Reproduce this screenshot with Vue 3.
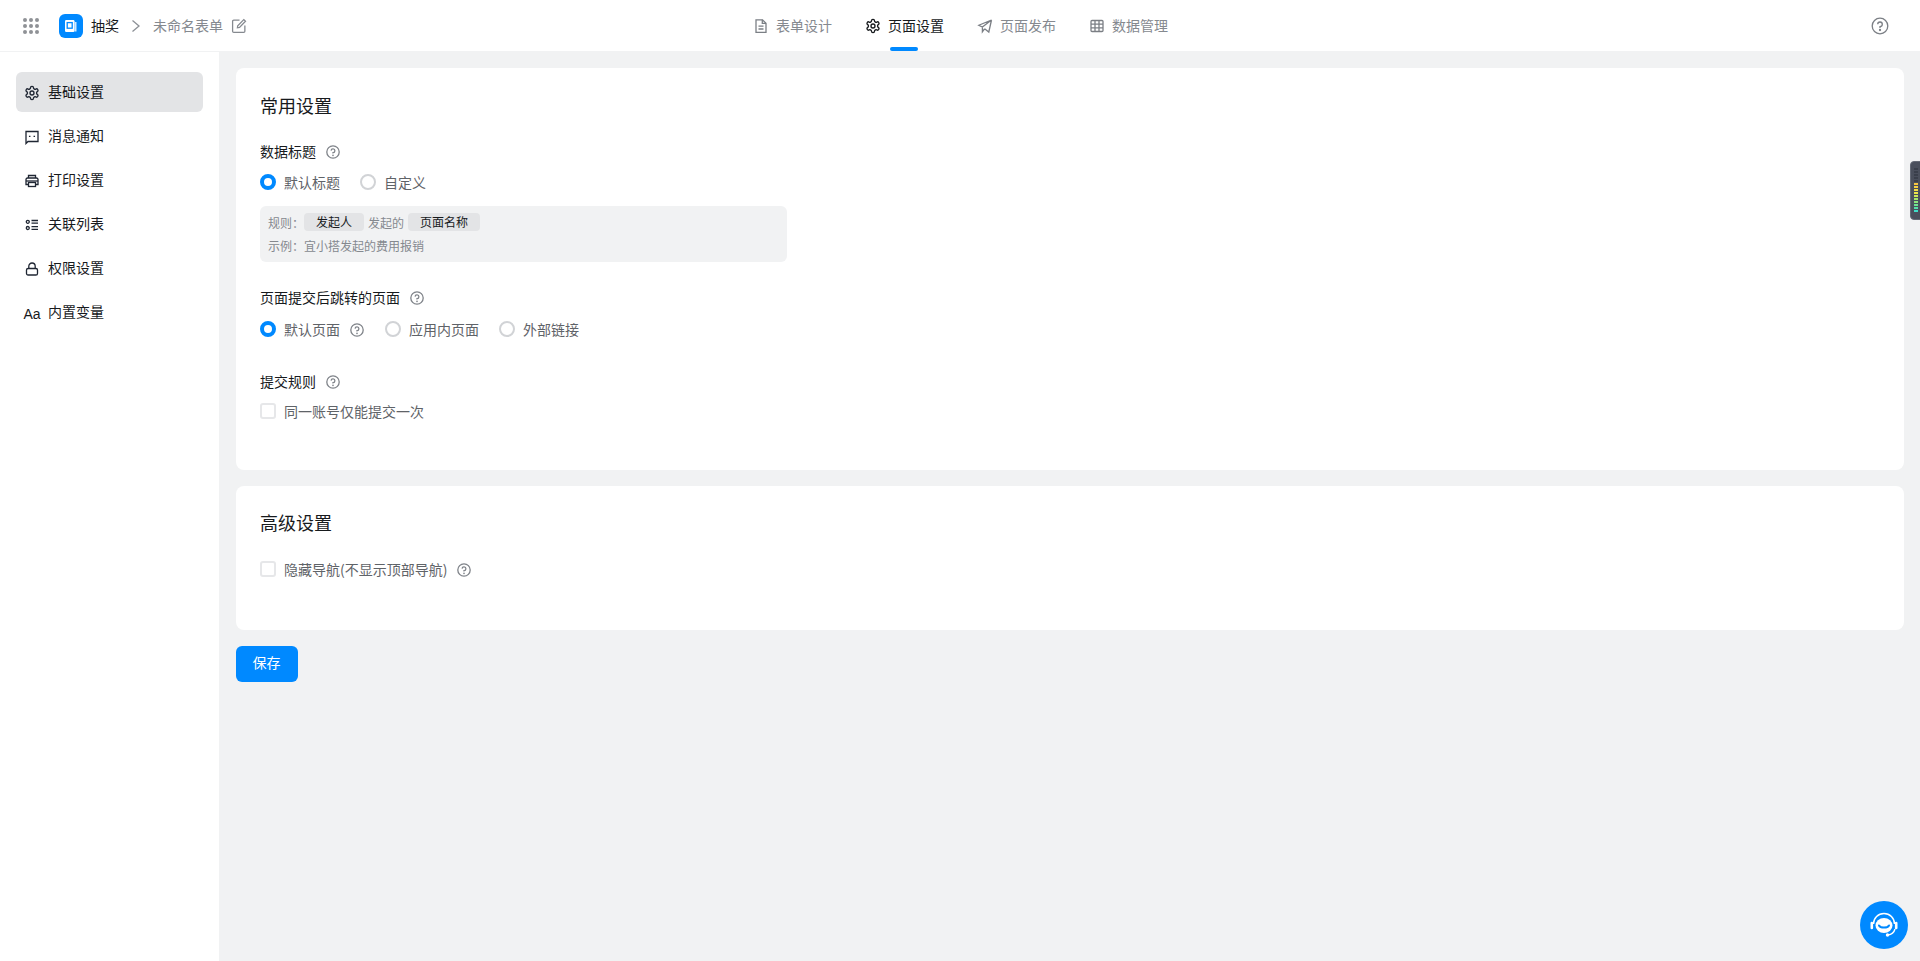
<script setup>
const navs = [
  { text: '表单设计', icon: 'doc' },
  { text: '页面设置', icon: 'gear', active: true },
  { text: '页面发布', icon: 'send' },
  { text: '数据管理', icon: 'table' }
]
const side = [
  { text: '基础设置', icon: 'gear', active: true },
  { text: '消息通知', icon: 'msg' },
  { text: '打印设置', icon: 'print' },
  { text: '关联列表', icon: 'list' },
  { text: '权限设置', icon: 'lock' },
  { text: '内置变量', icon: 'aa' }
]
const gearPath = 'M12.22 2h-.44a2 2 0 0 0-2 2v.18a2 2 0 0 1-1 1.73l-.43.25a2 2 0 0 1-2 0l-.15-.08a2 2 0 0 0-2.73.73l-.22.38a2 2 0 0 0 .73 2.73l.15.1a2 2 0 0 1 1 1.72v.51a2 2 0 0 1-1 1.74l-.15.09a2 2 0 0 0-.73 2.73l.22.38a2 2 0 0 0 2.73.73l.15-.08a2 2 0 0 1 2 0l.43.25a2 2 0 0 1 1 1.73V20a2 2 0 0 0 2 2h.44a2 2 0 0 0 2-2v-.18a2 2 0 0 1 1-1.73l.43-.25a2 2 0 0 1 2 0l.15.08a2 2 0 0 0 2.73-.73l.22-.39a2 2 0 0 0-.73-2.73l-.15-.08a2 2 0 0 1-1-1.74v-.5a2 2 0 0 1 1-1.74l.15-.09a2 2 0 0 0 .73-2.73l-.22-.38a2 2 0 0 0-2.73-.73l-.15.08a2 2 0 0 1-2 0l-.43-.25a2 2 0 0 1-1-1.73V4a2 2 0 0 0-2-2z'
const bars = ['#3a3f4b','#3a3f4b','#3a3f4b','#3a3f4b','#3a3f4b','#f5c542','#f5d142','#f2dc45','#eee64a','#cfe856','#a6e66a','#8ae47c','#6ee290','#55e0a8','#40ddc8']
</script>

<template>
  <div class="page">
    <header class="topbar">
      <div class="top-left">
        <span class="dots"><i v-for="n in 9" :key="n"></i></span>
        <span class="logo">
          <svg width="16" height="16" viewBox="0 0 16 16" fill="none">
            <rect x="2" y="2" width="9.5" height="12" rx="1.2" fill="#fff"/>
            <rect x="4.2" y="4.6" width="5" height="5.6" fill="none" stroke="#0089ff" stroke-width="1.3"/>
            <path d="M12.5 4v9.5" stroke="#cfe8ff" stroke-width="2"/>
          </svg>
        </span>
        <span class="app-name lift">抽奖</span>
        <svg class="chev" width="10" height="14" viewBox="0 0 10 14" fill="none"><path d="M1.5 1.5L8 7l-6.5 5.5" stroke="#8c9096" stroke-width="1.3"/></svg>
        <span class="form-name lift">未命名表单</span>
        <svg class="edit" width="16" height="16" viewBox="0 0 15 15" fill="none" stroke="#85898f" stroke-width="1.2"><path d="M8 2H2.6A1.1 1.1 0 0 0 1.5 3.1v9.3a1.1 1.1 0 0 0 1.1 1.1h9.3a1.1 1.1 0 0 0 1.1-1.1V7"/><path d="M6 9.2l.3-2L12 1.5l1.6 1.6L8 8.9z"/></svg>
      </div>
      <nav class="top-nav">
        <div v-for="n in navs" :key="n.text" class="nav-item" :class="{ on: n.active }">
          <svg width="16" height="16" viewBox="0 0 16 16" fill="none" stroke="currentColor" stroke-width="1.3">
            <template v-if="n.icon === 'doc'">
              <path d="M3 1.8h6.5L13 5.3v9H3z"/><path d="M9.3 1.8v3.6H13M5.5 8.2h5M5.5 11h5"/>
            </template>
            <template v-else-if="n.icon === 'gear'">
              <g transform="scale(.6667)" stroke-width="2"><path :d="gearPath"/><circle cx="12" cy="12" r="3"/></g>
            </template>
            <template v-else-if="n.icon === 'send'">
              <path d="M14.5 2L1.8 7.2l3.6 1.9L14.5 2zM14.5 2l-2.7 12-4.2-3.2M5.4 9.1v4.6l2.2-2.9"/>
            </template>
            <template v-else>
              <rect x="2" y="2.5" width="12" height="11" rx="1"/><path d="M6 2.5v11M10 2.5v11M2 6.2h12M2 9.8h12"/>
            </template>
          </svg>
          <span class="lift">{{ n.text }}</span>
        </div>
      </nav>
      <div class="top-right">
        <svg width="18" height="18" viewBox="0 0 18 18" fill="none" stroke="#7b7f85" stroke-width="1.3">
          <circle cx="9" cy="9" r="7.8"/><path d="M6.7 7.2A2.3 2.3 0 1 1 9 9.6v1.3"/><circle cx="9" cy="13" r=".5" fill="#7b7f85"/>
        </svg>
      </div>
    </header>

    <div class="body">
      <aside class="sidebar">
        <div v-for="s in side" :key="s.text" class="side-item" :class="{ on: s.active }">
          <span class="side-ic">
            <span v-if="s.icon === 'aa'" class="aa">Aa</span>
            <svg v-else width="16" height="16" viewBox="0 0 16 16" fill="none" stroke="#1f2633" stroke-width="1.3">
              <template v-if="s.icon === 'gear'"><g transform="scale(.6667)" stroke-width="2"><path :d="gearPath"/><circle cx="12" cy="12" r="3"/></g></template>
              <template v-else-if="s.icon === 'msg'"><path d="M2 2.5h12v10H4L2 14.5z"/><path d="M5.7 6.8v1.2M10.3 6.8v1.2" stroke-width="1.5"/></template>
              <template v-else-if="s.icon === 'print'"><path d="M4.5 5V2.5h7V5M4.5 11.5H2V6.5A1.5 1.5 0 0 1 3.5 5h9A1.5 1.5 0 0 1 14 6.5v5h-2.5"/><rect x="4.5" y="9.5" width="7" height="4"/><path d="M2 8h12"/></template>
              <template v-else-if="s.icon === 'list'"><circle cx="3.8" cy="4.8" r="1.5"/><circle cx="3.8" cy="11" r="1.5"/><path d="M7.5 3.5H14M7.5 6.2H14M7.5 9.6H14M7.5 12.3H14"/></template>
              <template v-else><rect x="2.5" y="7.5" width="11" height="6.5" rx="1.6"/><path d="M4.8 7.5V5.2a3.2 3.2 0 0 1 6.4 0v2.3"/></template>
            </svg>
          </span>
          <span class="lift">{{ s.text }}</span>
        </div>
      </aside>

      <main class="main">
        <section class="card card-a">
          <h2>常用设置</h2>
          <div class="field-label first">数据标题<svg class="help" viewBox="0 0 14 14"><use href="#q"/></svg></div>
          <div class="radios">
            <label class="radio on"><i></i>默认标题</label>
            <label class="radio"><i></i>自定义</label>
          </div>
          <div class="rule">
            <div class="rule-row">规则：<span class="tag">发起人</span><span class="mid">发起的</span><span class="tag wide">页面名称</span></div>
            <div class="rule-row example">示例：宜小搭发起的费用报销</div>
          </div>
          <div class="field-label second">页面提交后跳转的页面<svg class="help" viewBox="0 0 14 14"><use href="#q"/></svg></div>
          <div class="radios r2">
            <label class="radio on"><i></i>默认页面<svg class="help inner" viewBox="0 0 14 14"><use href="#q"/></svg></label>
            <label class="radio"><i></i>应用内页面</label>
            <label class="radio"><i></i>外部链接</label>
          </div>
          <div class="field-label third">提交规则<svg class="help" viewBox="0 0 14 14"><use href="#q"/></svg></div>
          <label class="check"><i></i>同一账号仅能提交一次</label>
        </section>

        <section class="card card-b">
          <h2>高级设置</h2>
          <label class="check hide-nav"><i></i>隐藏导航(不显示顶部导航)<svg class="help" viewBox="0 0 14 14"><use href="#q"/></svg></label>
        </section>

        <button class="save">保存</button>
      </main>
    </div>

    <svg class="defs" width="0" height="0">
      <symbol id="q" viewBox="0 0 14 14">
        <circle cx="7" cy="7" r="6.2" fill="none" stroke="#7f8389" stroke-width="1.3"/>
        <path d="M5.1 5.6A1.9 1.9 0 1 1 7 7.6v1" fill="none" stroke="#7f8389" stroke-width="1.3"/>
        <circle cx="7" cy="10.4" r=".8" fill="#7f8389"/>
      </symbol>
    </svg>

    <div class="meter">
      <i v-for="(c, idx) in bars" :key="idx" :style="{ background: c }"></i>
    </div>

    <div class="service">
      <svg width="34" height="34" viewBox="0 0 34 34" fill="none">
        <ellipse cx="17" cy="17.5" rx="8.5" ry="7.5" fill="#fff"/>
        <path d="M6.5 16a10.5 10.5 0 0 1 21 0" stroke="#fff" stroke-width="1.5"/>
        <path d="M4.8 15v5M29.2 15v5" stroke="#fff" stroke-width="2.6" stroke-linecap="round"/>
        <path d="M28 21c-1 3.6-3.4 5.6-7 6" stroke="#fff" stroke-width="1.4"/>
        <circle cx="20.5" cy="27" r="1.7" fill="#fff"/>
        <path d="M12 17.5c1.5 2.8 8.5 2.8 10 0" stroke="#0089ff" stroke-width="2" stroke-linecap="round"/>
      </svg>
    </div>
  </div>
</template>

<style>
html, body { margin: 0; background: #f1f2f3; }
</style>

<style scoped>
.page {
  position: relative;
  height: 961px;
  overflow: hidden;
  display: flex;
  flex-direction: column;
  font-family: "Noto Sans CJK SC", "Noto Sans", sans-serif;
  font-size: 14px;
  color: #171a1d;
  background: #f1f2f3;
}
.lift { padding-bottom: 2px; }
.topbar {
  height: 52px;
  flex: none;
  display: flex;
  align-items: center;
  background: #fff;
  box-sizing: border-box;
  border-bottom: 1px solid #f1f2f3;
  position: relative;
}
.top-left {
  display: flex;
  align-items: center;
  padding-left: 23px;
  width: 500px;
}
.dots {
  width: 16px;
  display: grid;
  grid-template-columns: repeat(3, 4px);
  gap: 2px;
  margin-right: 20px;
}
.dots i {
  width: 4px;
  height: 4px;
  border-radius: 50%;
  background: #8f9296;
}
.logo {
  width: 24px;
  height: 24px;
  border-radius: 6px;
  background: #0089ff;
  display: flex;
  align-items: center;
  justify-content: center;
}
.app-name { margin-left: 8px; }
.chev { margin: 0 12px 0 12px; }
.form-name { color: #85898f; margin-right: 8px; }
.edit { margin-top: 1px; }
.top-nav {
  position: absolute;
  left: 753px;
  top: 0;
  height: 51px;
  display: flex;
  gap: 33px;
}
.nav-item {
  position: relative;
  display: flex;
  align-items: center;
  gap: 7px;
  color: #85898f;
}
.nav-item svg { color: #7b7f85; margin-top: 1px; }
.nav-item.on, .nav-item.on svg { color: #171a1d; }
.nav-item.on::after {
  content: "";
  position: absolute;
  left: 25px;
  bottom: 0;
  width: 28px;
  height: 4px;
  border-radius: 2px;
  background: #0089ff;
}
.top-right {
  margin-left: auto;
  padding-right: 31px;
  display: flex;
}
.body {
  flex: 1;
  display: flex;
  min-height: 0;
}
.sidebar {
  width: 219px;
  flex: none;
  box-sizing: border-box;
  background: #fff;
  padding: 20px 16px 0;
}
.side-item {
  height: 40px;
  margin-bottom: 4px;
  display: flex;
  align-items: center;
  padding-left: 8px;
  border-radius: 6px;
  color: #171a1d;
}
.side-item.on { background: #e3e4e6; }
.side-ic {
  width: 16px;
  height: 16px;
  margin-right: 8px;
  margin-top: 1px;
  display: flex;
  align-items: center;
  justify-content: center;
}
.aa {
  font-family: "Liberation Sans", sans-serif;
  font-size: 14px;
  line-height: 16px;
  margin-top: 3px;
}
.main {
  flex: 1;
  min-width: 0;
  padding: 16px 16px 0 17px;
}
.card {
  background: #fff;
  border-radius: 8px;
  padding: 0 24px;
  box-sizing: border-box;
  margin-bottom: 16px;
}
.card-a { height: 402px; padding-top: 24px; }
.card-b { height: 144px; padding-top: 23px; }
h2 {
  margin: 0;
  font-size: 18px;
  font-weight: 400;
  line-height: 26px;
}
.field-label {
  display: flex;
  align-items: center;
  line-height: 22px;
}
.field-label.first { margin-top: 22px; }
.field-label.second { margin-top: 24px; }
.field-label.third { margin-top: 30px; }
.help {
  width: 14px;
  height: 14px;
  margin-left: 10px;
  margin-top: 1px;
  flex: none;
}
.help.inner { margin-left: 10px; margin-right: 1px; margin-top: 2px; }
.radios {
  display: flex;
  gap: 20px;
  margin-top: 9px;
  height: 22px;
  align-items: center;
}
.r2 { margin-top: 10px; }
.radio {
  display: flex;
  align-items: center;
  color: #5f6368;
  line-height: 22px;
}
.radio i {
  width: 16px;
  height: 16px;
  box-sizing: border-box;
  border-radius: 50%;
  border: 2px solid #d1d3d6;
  margin-right: 8px;
  background: #fff;
}
.radio.on i { border: 4.5px solid #0089ff; }
.rule {
  width: 527px;
  height: 56px;
  margin-top: 13px;
  box-sizing: border-box;
  background: #f1f2f3;
  border-radius: 6px;
  padding: 7px 8px;
  font-size: 12px;
  color: #85898f;
}
.rule-row {
  display: flex;
  align-items: center;
  height: 18px;
}
.rule-row.example { margin-top: 5px; }
.tag {
  width: 60px;
  height: 18px;
  line-height: 18px;
  text-align: center;
  border-radius: 4px;
  background: #e3e4e6;
  color: #171a1d;
}
.tag.wide { width: 72px; }
.mid { margin: 0 4px; }
.check {
  display: flex;
  align-items: center;
  color: #5f6368;
  line-height: 22px;
}
.check i {
  width: 16px;
  height: 16px;
  box-sizing: border-box;
  border: 2px solid #e6e7e9;
  border-radius: 3px;
  margin-right: 8px;
  background: #fff;
}
.field-label.third + .check { margin-top: 8px; }
.hide-nav { margin-top: 23px; }
.hide-nav .help { margin-left: 10px; }
.save {
  display: block;
  width: 62px;
  height: 36px;
  border: none;
  border-radius: 6px;
  background: #0089ff;
  color: #fff;
  font-family: inherit;
  font-size: 14px;
  padding: 0 1px 5px 0;
}
.meter {
  position: absolute;
  left: 1910px;
  top: 161px;
  width: 16px;
  height: 59px;
  box-sizing: border-box;
  background: #4a4f5c;
  border: 1px solid #646975;
  border-radius: 4px;
  padding: 6px 0 5px 3px;
  display: flex;
  flex-direction: column;
  gap: 1px;
}
.meter i {
  display: block;
  height: 2px;
  width: 4px;
}
.service {
  position: absolute;
  left: 1860px;
  top: 901px;
  width: 48px;
  height: 48px;
  border-radius: 50%;
  background: #0089ff;
  display: flex;
  align-items: center;
  justify-content: center;
}
.defs { position: absolute; }
</style>
